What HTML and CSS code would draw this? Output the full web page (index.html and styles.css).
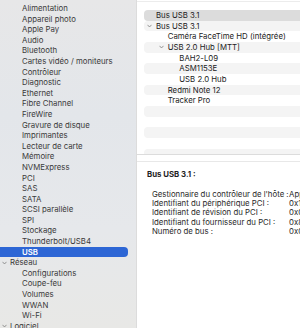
FILE: index.html
```html
<!DOCTYPE html>
<html>

<head>
    <meta charset="utf-8">
    <title>Informations système</title>
    <link rel="stylesheet" href="styles.css">
</head>

<body>
    <div class="window">
        <div class="sidebar">
            <ul class="side-list">
                <li class="item">ATA</li>
                <li class="item">Alimentation</li>
                <li class="item">Appareil photo</li>
                <li class="item">Apple Pay</li>
                <li class="item">Audio</li>
                <li class="item">Bluetooth</li>
                <li class="item">Cartes vidéo / moniteurs</li>
                <li class="item">Contrôleur</li>
                <li class="item">Diagnostic</li>
                <li class="item">Ethernet</li>
                <li class="item">Fibre Channel</li>
                <li class="item">FireWire</li>
                <li class="item">Gravure de disque</li>
                <li class="item">Imprimantes</li>
                <li class="item">Lecteur de carte</li>
                <li class="item">Mémoire</li>
                <li class="item">NVMExpress</li>
                <li class="item">PCI</li>
                <li class="item">SAS</li>
                <li class="item">SATA</li>
                <li class="item">SCSI parallèle</li>
                <li class="item">SPI</li>
                <li class="item">Stockage</li>
                <li class="item">Thunderbolt/USB4</li>
                <li class="item selected">USB</li>
                <li class="group"><svg class="chev" viewBox="0 0 6 4"><polyline points="0.6,0.6 3,3.2 5.4,0.6"/></svg>Réseau</li>
                <li class="item">Configurations</li>
                <li class="item">Coupe-feu</li>
                <li class="item">Volumes</li>
                <li class="item">WWAN</li>
                <li class="item">Wi-Fi</li>
                <li class="group"><svg class="chev" viewBox="0 0 6 4"><polyline points="0.6,0.6 3,3.2 5.4,0.6"/></svg>Logiciel</li>
            </ul>
        </div>

        <div class="main">
            <div class="tree">
                <div class="row current"><span class="lvl0">Bus USB 3.1</span></div>
                <div class="row"><span class="lvl0"><svg class="chev" viewBox="0 0 6 4"><polyline points="0.6,0.6 3,3.2 5.4,0.6"/></svg>Bus USB 3.1</span></div>
                <div class="row"><span class="lvl1">Caméra FaceTime HD (intégrée)</span></div>
                <div class="row"><span class="lvl1"><svg class="chev" viewBox="0 0 6 4"><polyline points="0.6,0.6 3,3.2 5.4,0.6"/></svg>USB 2.0 Hub [MTT]</span></div>
                <div class="row"><span class="lvl2">BAH2-L09</span></div>
                <div class="row"><span class="lvl2">ASM1153E</span></div>
                <div class="row"><span class="lvl2">USB 2.0 Hub</span></div>
                <div class="row"><span class="lvl1">Redmi Note 12</span></div>
                <div class="row"><span class="lvl1">Tracker Pro</span></div>
                <div class="row"></div>
                <div class="row"></div>
                <div class="row"></div>
                <div class="row"></div>
                <div class="row"></div>
            </div>

            <div class="details">
                <h4>Bus USB 3.1 :</h4>
                <div class="props">
                    <span>Gestionnaire du contrôleur de l'hôte :</span><span>AppleT8112USBXHCI</span>
                    <span>Identifiant du périphérique PCI :</span><span>0x15e9</span>
                    <span>Identifiant de révision du PCI :</span><span>0x0000</span>
                    <span>Identifiant du fournisseur du PCI :</span><span>0x8086</span>
                    <span>Numéro de bus :</span><span>0x02</span>
                </div>
            </div>
        </div>
    </div>
</body>

</html>
```

FILE: styles.css
```css
body {
    margin: 0;
    font-family: Inter, "Liberation Sans", sans-serif;
    font-size: 7.8px;
    color: #2b2b2b;
    background-color: white;
}

.window {
    display: flex;
    width: 300px;
    height: 328px;
    overflow: hidden;
}

.sidebar {
    width: 136px;
    flex: none;
    overflow: hidden;
    background: linear-gradient(#e7e7e8, #e3e6ea 35%, #e6e8eb 70%, #e8e8e6);
    border-right: 1px solid #dcdcdc;
}

.side-list {
    list-style: none;
    margin: -7.6px 0 0 0;
    padding: 0;
}

.side-list li {
    height: 10.6px;
    line-height: 10.6px;
    white-space: nowrap;
    color: #3a3a3a;
}

.item {
    padding-left: 22px;
}

.item.selected {
    background-color: #2d66d5;
    color: white;
    font-weight: 600;
    margin: 0 8px 0 -6px;
    padding-left: 28px;
    border-radius: 4px;
}

.group {
    display: flex;
    align-items: center;
    padding-left: 2px;
}

.chev {
    width: 5px;
    height: 4px;
    margin-right: 3px;
    fill: none;
    stroke: #777;
    stroke-width: 0.9;
}

.main {
    flex: 1;
    display: flex;
    flex-direction: column;
    min-width: 0;
}

.tree {
    height: 144px;
    padding-top: 8px;
    border-top: 1px solid #ececec;
    margin-top: 1px;
    overflow: hidden;
    border-bottom: 1px solid #dcdcdc;
}

.row {
    height: 10.67px;
    line-height: 10.67px;
    margin-left: 7px;
    border-radius: 4px 0 0 4px;
    white-space: nowrap;
    color: #222;
}

.row:nth-child(even) {
    background-color: #f4f4f4;
}

.row.current {
    background-color: #dcdcdc;
}

.row span {
    display: flex;
    align-items: center;
}

.row .chev {
    margin-left: -9px;
    margin-right: 4px;
}

.lvl0 {
    padding-left: 12px;
}

.lvl1 {
    padding-left: 23.7px;
}

.lvl2 {
    padding-left: 35.3px;
}

.details {
    flex: 1;
    margin-top: 6px;
    border-top: 1px solid #e8e8e8;
    padding: 7px 0 0 10px;
    white-space: nowrap;
    overflow: hidden;
}

.details h4 {
    margin: 0 0 11px 0;
    font-size: 7.8px;
    font-weight: 700;
    color: #1e1e1e;
}

.props {
    display: grid;
    grid-template-columns: 137px max-content;
    margin-left: 5px;
    line-height: 9.2px;
    color: #2a2a2a;
}
```
